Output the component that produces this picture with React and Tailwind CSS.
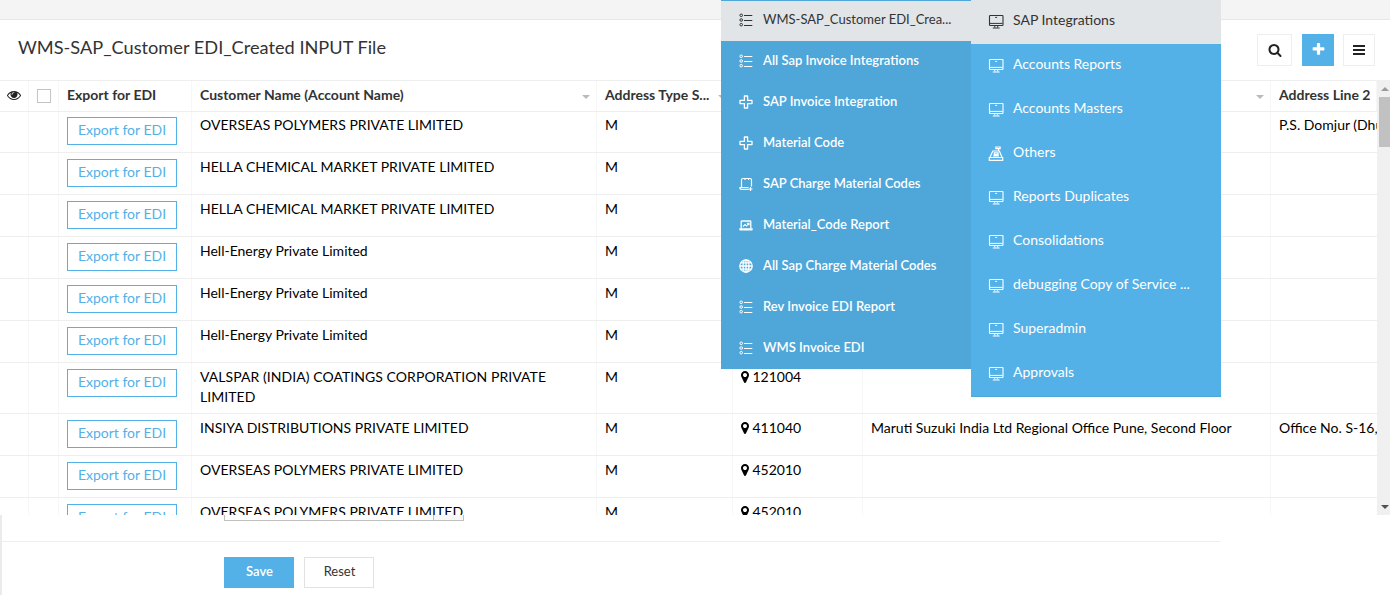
import React from "react";

const EYE =
  "M1664 960q-152-236-381-353 61 104 61 225 0 185-131.5 316.5t-316.5 131.5-316.5-131.5-131.5-316.5q0-121 61-225-229 117-381 353 133 205 333.5 326.5t434.5 121.5 434.5-121.5 333.5-326.5zm-720-384q0-20-14-34t-34-14q-125 0-214.5 89.5t-89.5 214.5q0 20 14 34t34 14 34-14 14-34q0-86 61-147t147-61q20 0 34-14t14-34zm848 384q0 34-20 69-140 230-376.5 368.5t-499.5 138.5-499.5-139-376.5-368q-20-35-20-69t20-69q140-229 376.5-368t499.5-139 499.5 139 376.5 368q20 35 20 69z";
const SEARCH =
  "M1216 832q0-185-131.5-316.5t-316.5-131.5-316.5 131.5-131.5 316.5 131.5 316.5 316.5 131.5 316.5-131.5 131.5-316.5zm512 832q0 52-38 90t-90 38q-54 0-90-38l-343-342q-179 124-399 124-143 0-273.5-55.5t-225-150-150-225-55.5-273.5 55.5-273.5 150-225 225-150 273.5-55.5 273.5 55.5 225 150 150 225 55.5 273.5q0 220-124 399l343 343q37 37 37 90z";
const PLUS =
  "M1600 736v192q0 40-28 68t-68 28h-416v416q0 40-28 68t-68 28h-192q-40 0-68-28t-28-68v-416h-416q-40 0-68-28t-28-68v-192q0-40 28-68t68-28h416v-416q0-40 28-68t68-28h192q40 0 68 28t28 68v416h416q40 0 68 28t28 68z";
const PIN =
  "M1152 640q0-106-75-181t-181-75-181 75-75 181 75 181 181 75 181-75 75-181zm256 0q0 109-33 179l-364 774q-16 33-47.5 52t-67.5 19-67.5-19-46.5-52l-365-774q-33-70-33-179 0-212 150-362t362-150 362 150 150 362z";

function Glyph({ d, className }) {
  return (
    <svg viewBox="0 0 1792 1792" fill="currentColor" className={className}>
      <path d={d} />
    </svg>
  );
}

function Bars() {
  return (
    <svg viewBox="0 0 12 10" fill="currentColor" className="w-3 h-2.5">
      <path d="M0 0h12v2H0zM0 4h12v2H0zM0 8h12v2H0z" />
    </svg>
  );
}

const iconProps = {
  viewBox: "0 0 14 14",
  fill: "none",
  stroke: "currentColor",
  className: "w-3.5 h-3.5 shrink-0 -mt-0.5",
};

function ListIcon() {
  return (
    <svg {...iconProps}>
      <g strokeWidth="1">
        <circle cx="2.2" cy="2.3" r="1.3" />
        <circle cx="2.2" cy="7" r="1.3" />
        <circle cx="2.2" cy="11.7" r="1.3" />
        <path d="M5 2.5H13.3M5 7.5H13.3M5 12.5H13.3" />
      </g>
    </svg>
  );
}

function CrossIcon() {
  return (
    <svg {...iconProps}>
      <path strokeWidth="1.3" strokeLinejoin="round" d="M5.4 1h3.2v4.4H13v3.2H8.6V13H5.4V8.6H1V5.4h4.4z" />
    </svg>
  );
}

function ScrollIcon() {
  return (
    <svg {...iconProps}>
      <path strokeWidth="1.2" d="M2.5 10.5v-7.5q0-1.5 1.5-1.5h7q1.5 0 1.5 1.5v6.5M6 1.5v1.5M9.5 1.5v1.5" />
      <path strokeWidth="1.2" d="M9.5 10.7H0.8q0 1.8 1.5 1.8h7.2M11.5 10v4M9.5 12h4" />
    </svg>
  );
}

function LaptopIcon() {
  return (
    <svg {...iconProps}>
      <path strokeWidth="1.3" d="M2.2 10.5V3.7q0-.7.7-.7h8.2q.7 0 .7.7V10.5" />
      <path strokeWidth="1.1" d="M4 8.5l2-2 1.5 1.5L9.8 5.5M7.8 5.3h2.2v2" />
      <path fill="currentColor" stroke="none" d="M0.3 10.3h13.4v1.2q0 1-1 1H1.3q-1 0-1-1z" />
    </svg>
  );
}

function GlobeIcon() {
  return (
    <svg {...iconProps}>
      <g strokeWidth="1.3">
        <circle cx="7" cy="7" r="6.2" />
        <ellipse cx="7" cy="7" rx="3" ry="6.2" />
        <path d="M7 0.8v12.4M0.8 7h12.4M1.8 3.8h10.4M1.8 10.2h10.4" />
      </g>
    </svg>
  );
}

function MonitorIcon() {
  return (
    <svg viewBox="0 0 16 15" fill="none" stroke="currentColor" className="w-4 h-[15px] shrink-0 -mt-0.5">
      <rect x="1.5" y="1.5" width="13.5" height="10" rx="0.7" strokeWidth="1.1" />
      <path d="M2 9.4h12.5" strokeWidth="1" />
      <path d="M7.2 3.4h1.9M6.8 12v1.5M9.7 12v1.5M4.8 14h6.8" strokeWidth="1" />
    </svg>
  );
}

function RegisterIcon() {
  return (
    <svg viewBox="0 0 16 15" fill="none" stroke="currentColor" className="w-4 h-[15px] shrink-0 -mt-0.5">
      <path strokeWidth="1.2" d="M1.3 11.5h13.4v2.8H1.3zM2 11.2L4.8 5h6.6l2.6 6.2M6.3 6.8h3.8v1.8H6.3zM5.2 9.8h5.6" />
      <path strokeWidth="1.1" d="M7.8 1h4.4v1.6H7.8zM10.5 2.6V5" />
    </svg>
  );
}

const submenu = [
  [ListIcon, "All Sap Invoice Integrations"],
  [CrossIcon, "SAP Invoice Integration"],
  [CrossIcon, "Material Code"],
  [ScrollIcon, "SAP Charge Material Codes"],
  [LaptopIcon, "Material_Code Report"],
  [GlobeIcon, "All Sap Charge Material Codes"],
  [ListIcon, "Rev Invoice EDI Report"],
  [ListIcon, "WMS Invoice EDI"],
];

const menu = [
  [MonitorIcon, "Accounts Reports"],
  [MonitorIcon, "Accounts Masters"],
  [RegisterIcon, "Others"],
  [MonitorIcon, "Reports Duplicates"],
  [MonitorIcon, "Consolidations"],
  [MonitorIcon, "debugging Copy of Service ..."],
  [MonitorIcon, "Superadmin"],
  [MonitorIcon, "Approvals"],
];

const rows = [
  { name: "OVERSEAS POLYMERS PRIVATE LIMITED", line2: "P.S. Domjur (Dhul" },
  { name: "HELLA CHEMICAL MARKET PRIVATE LIMITED" },
  { name: "HELLA CHEMICAL MARKET PRIVATE LIMITED" },
  { name: "Hell-Energy Private Limited" },
  { name: "Hell-Energy Private Limited" },
  { name: "Hell-Energy Private Limited" },
  { name: "VALSPAR (INDIA) COATINGS CORPORATION PRIVATE LIMITED", pin: "121004", tall: true },
  {
    name: "INSIYA DISTRIBUTIONS PRIVATE LIMITED",
    pin: "411040",
    line1: "Maruti Suzuki India Ltd Regional Office Pune, Second Floor",
    line2: "Office No. S-16,",
  },
  { name: "OVERSEAS POLYMERS PRIVATE LIMITED", pin: "452010" },
  { name: "OVERSEAS POLYMERS PRIVATE LIMITED", pin: "452010" },
];

const COLS = "grid grid-cols-[29px_30px_133px_405px_136px_130px_408px_106px]";
const CELL = "border-r border-[#f7f7f7] px-2 overflow-hidden";

function SortCaret() {
  return <span className="shrink-0 ml-auto border-x-4 border-t-4 border-x-transparent border-t-[#bbb] mt-[1px]" />;
}

function HeadCell({ children, caret }) {
  return (
    <div className={`${CELL} flex items-center pr-[6px] whitespace-nowrap`}>
      <span className="-mt-1">{children}</span>
      {caret && <SortCaret />}
    </div>
  );
}

function Row({ row, index }) {
  const height = index === 0 ? "h-[41px]" : row.tall ? "h-[51px]" : "h-[42px]";
  const pad = index === 0 ? "pt-[3px]" : "pt-1";
  const btnPad = index === 0 ? "pt-[5px]" : "pt-1.5";
  const tracking = row.tall ? "tracking-[0.06px]" : row.name.startsWith("Hell-") ? "" : "tracking-[0.03px]";
  return (
    <div className={`${COLS} ${height} shrink-0 border-b border-[#eee] text-[14px] leading-5 text-black`}>
      <div className={CELL} />
      <div className={CELL} />
      <div className={`${CELL} ${btnPad}`}>
        <button className="block w-[110px] h-7 border border-[#54b1e7] text-[#54b1e7] leading-[24px] pb-0.5">
          Export for EDI
        </button>
      </div>
      <div className={`${CELL} ${pad} ${tracking}`}>{row.name}</div>
      <div className={`${CELL} ${pad}`}>M</div>
      <div className={`${CELL} ${pad} flex items-start`}>
        {row.pin && (
          <>
            <Glyph d={PIN} className="w-3.5 h-3.5 -ml-[3px] mr-[0.5px] mt-[3px]" />
            <span>{row.pin}</span>
          </>
        )}
      </div>
      <div className={`${CELL} ${pad} whitespace-nowrap`}>{row.line1}</div>
      <div className={`pl-2 ${pad} whitespace-nowrap overflow-hidden`}>{row.line2}</div>
    </div>
  );
}

export default function App() {
  return (
    <div className="relative flex flex-col w-[1390px] h-[595px] overflow-hidden bg-white font-['Lato',sans-serif] text-[14px] text-[#333]">
      <div className="h-5 shrink-0 bg-[#f4f4f4] border-b border-[#e7e7e7]" />
      <header className="h-[60px] shrink-0 flex items-center justify-between pl-[18px] pr-[15px]">
        <h1 className="text-[18.2px] leading-6 -mt-1.5">WMS-SAP_Customer EDI_Created INPUT File</h1>
        <div className="flex text-[#222]">
          <button className="w-[35px] h-8 border border-[#eee] flex items-center justify-center mr-2.5">
            <Glyph d={SEARCH} className="w-3.5 h-3.5" />
          </button>
          <button className="w-8 h-8 bg-[#54b1e7] text-white flex items-center justify-center mr-[9px]">
            <Glyph d={PLUS} className="w-[15px] h-[15px] -mt-px" />
          </button>
          <button className="w-8 h-8 border border-[#eee] flex items-center justify-center">
            <Bars />
          </button>
        </div>
      </header>

      <section className="h-[435px] shrink-0 flex overflow-hidden">
        <div className="w-[1377px] flex flex-col overflow-hidden">
          <div className={`${COLS} h-8 shrink-0 border-y border-[#eee] font-bold text-[14px]`}>
            <div className="border-r border-[#f7f7f7] flex items-center justify-center">
              <Glyph d={EYE} className="w-3.5 h-3.5 text-[#222] -mt-0.5" />
            </div>
            <div className="border-r border-[#f7f7f7] flex items-center pl-2">
              <span className="w-3.5 h-3.5 border border-[#c4c4c4]" />
            </div>
            <HeadCell>Export for EDI</HeadCell>
            <HeadCell caret>Customer Name (Account Name)</HeadCell>
            <HeadCell caret>Address Type S...</HeadCell>
            <HeadCell />
            <HeadCell caret />
            <HeadCell>Address Line 2</HeadCell>
          </div>
          {rows.map((row, i) => (
            <Row key={i} row={row} index={i} />
          ))}
        </div>
        <div className="w-[13px] bg-[#f0f0f0] flex flex-col items-end justify-between pt-[7px] pb-1.5">
          <div className="flex flex-col items-end">
            <span className="mr-px border-x-4 border-b-4 border-x-transparent border-b-[#9a9a9a]" />
            <span className="mt-1.5 w-[11px] h-[50px] bg-[#c1c1c1]" />
          </div>
          <span className="mr-px border-x-4 border-t-4 border-x-transparent border-t-[#505050]" />
        </div>
      </section>

      <footer className="grow border-l-2 border-[#ebebeb]">
        <div className="w-[1218px] h-[27px] border-b border-[#eee] pl-[222px]">
          <div className="w-60 h-1.5 border-x border-b border-[#c0c0c0] flex justify-end">
            <span className="w-[30px] border-l border-[#c0c0c0] bg-[#f7f7f7]" />
          </div>
        </div>
        <div className="flex gap-2.5 pl-[222px] pt-[15px] text-[13px]">
          <button className="w-[70px] h-[31px] pb-0.5 pl-px bg-[#54b1e7] text-white font-semibold">Save</button>
          <button className="w-[70px] h-[31px] pb-0.5 pl-px border border-[#e2e2e2]">Reset</button>
        </div>
      </footer>

      <nav className="absolute left-[721px] top-0 w-[250px] h-[369px] bg-[#4ea6d9] border-t border-[#4ea6d9] text-[13px] text-white font-semibold">
        <a className="flex items-center h-10 gap-2.5 pl-[18px] bg-[#e1e5e8] text-[#333] font-normal text-[13px]">
          <ListIcon />
          <span className="-mt-0.5">WMS-SAP_Customer EDI_Crea...</span>
        </a>
        {submenu.map(([Icon, label]) => (
          <a key={label} className="flex items-center h-[41px] gap-2.5 pl-[18px] whitespace-nowrap">
            <Icon />
            <span className="-mt-0.5">{label}</span>
          </a>
        ))}
      </nav>
      <nav className="absolute left-[971px] top-0 w-[250px] h-[397px] bg-[#54b1e7] border-b border-[#4ea6d9] text-[14px] text-white">
        <a className="flex items-center h-11 gap-[9px] pl-[17px] bg-[#e1e5e8] text-[#333]">
          <MonitorIcon />
          <span className="-mt-1.5">SAP Integrations</span>
        </a>
        {menu.map(([Icon, label]) => (
          <a key={label} className="flex items-center h-11 gap-[9px] pl-[17px] whitespace-nowrap">
            <Icon />
            <span className="-mt-1.5">{label}</span>
          </a>
        ))}
      </nav>
    </div>
  );
}
